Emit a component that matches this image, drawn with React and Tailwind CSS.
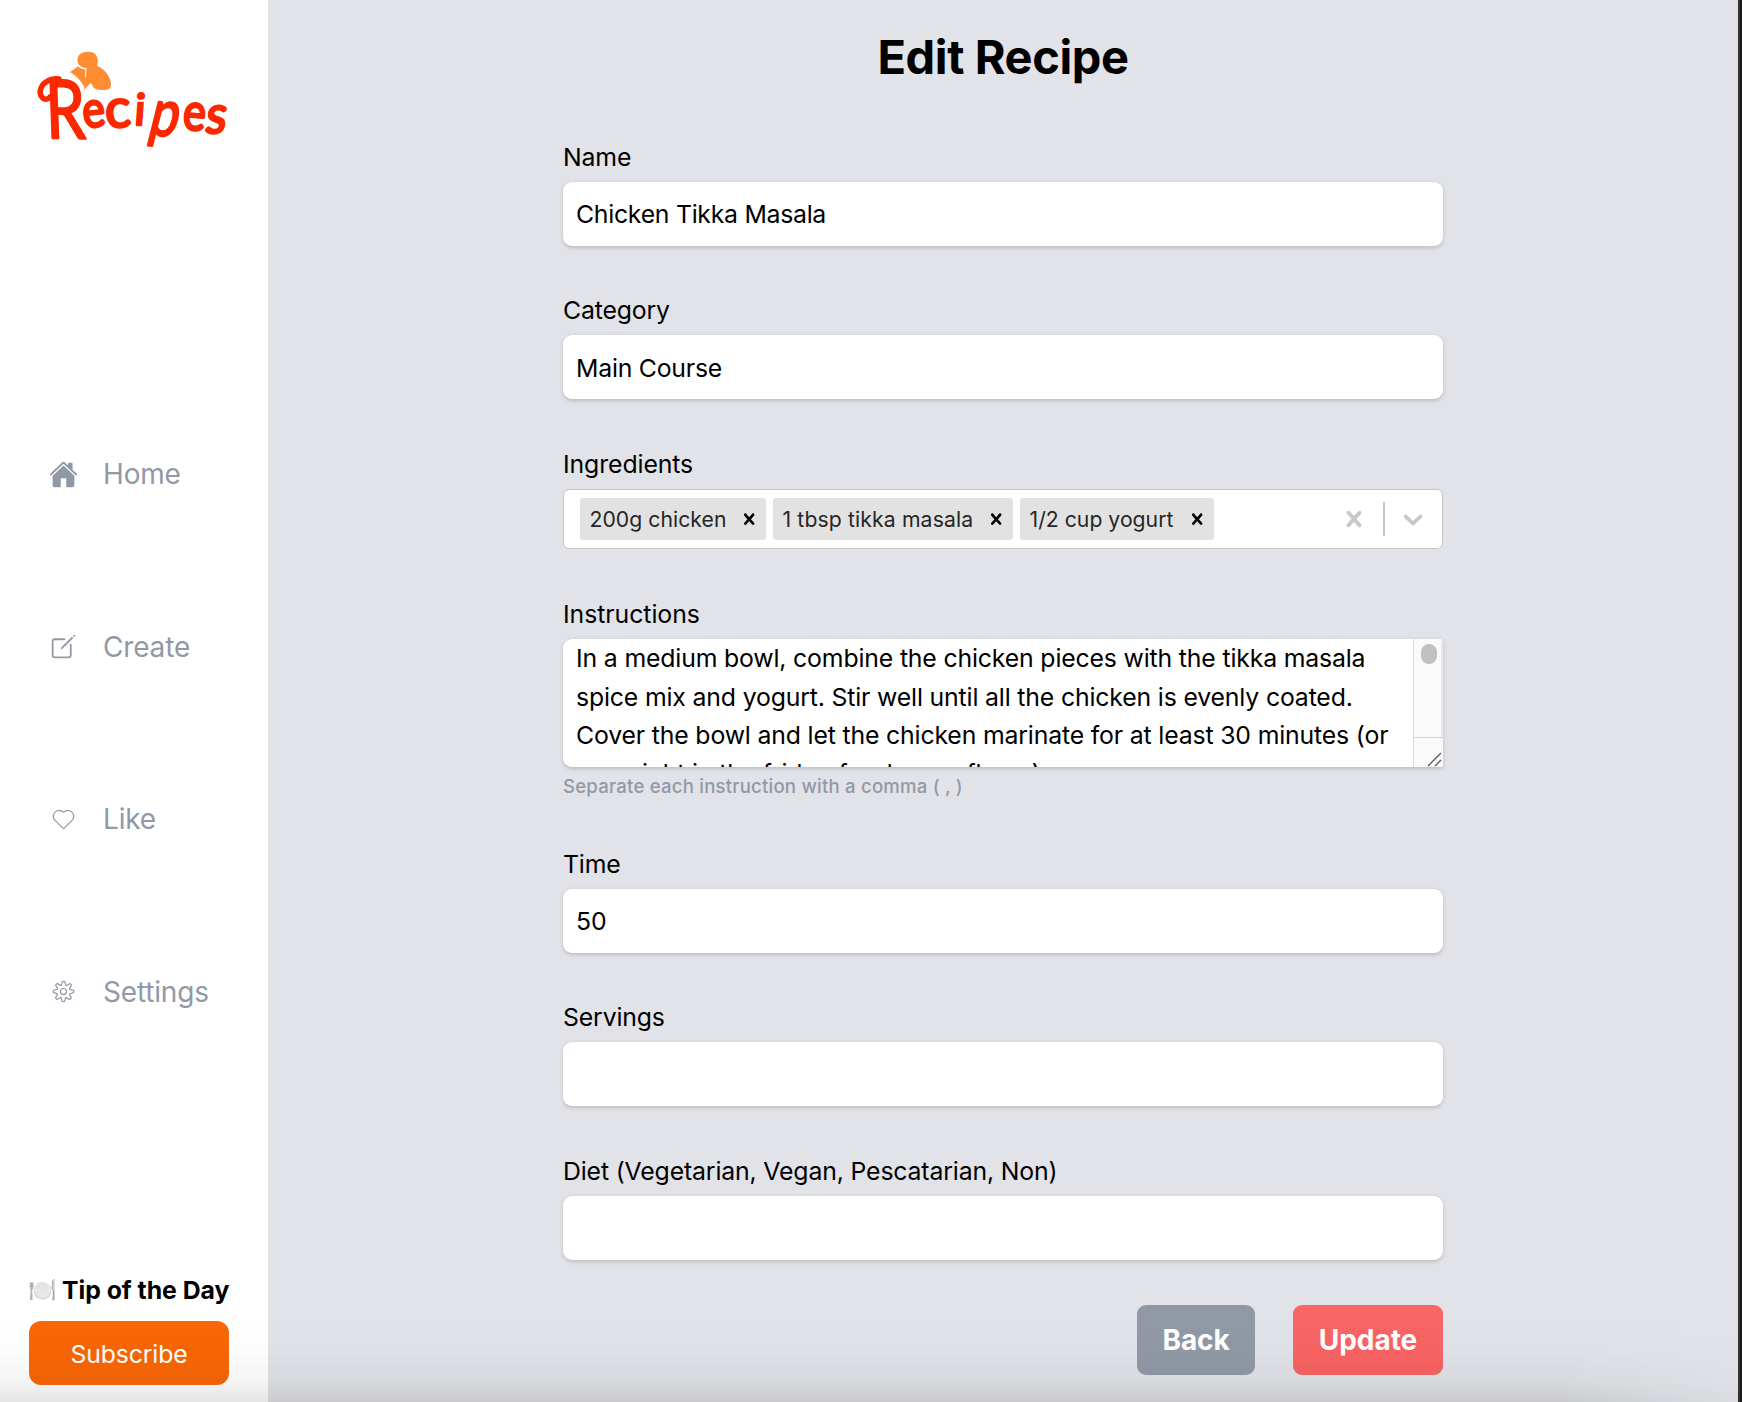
import React from "react";
import { IoHome, IoCreateOutline } from "react-icons/io5";
import { CiHeart, CiSettings } from "react-icons/ci";

const NAV = [
  { label: "Home", Icon: IoHome },
  { label: "Create", Icon: IoCreateOutline },
  { label: "Like", Icon: CiHeart },
  { label: "Settings", Icon: CiSettings },
];

const CHIPS = [
  { label: "200g chicken", width: "w-[186px]", spacing: "tracking-[0.002em]" },
  { label: "1 tbsp tikka masala", width: "w-[240px]", spacing: "tracking-[0.006em]" },
  { label: "1/2 cup yogurt", width: "w-[194px]", spacing: "tracking-[0.001em]" },
];

const LINES = [
  "In a medium bowl, combine the chicken pieces with the tikka masala",
  "spice mix and yogurt. Stir well until all the chicken is evenly coated.",
  "Cover the bowl and let the chicken marinate for at least 30 minutes (or",
  "overnight in the fridge for deeper flavor)",
];

const CROSS =
  "M14.348 14.849c-0.469 0.469-1.229 0.469-1.697 0l-2.651-3.030-2.651 3.029c-0.469 0.469-1.229 0.469-1.697 0-0.469-0.469-0.469-1.229 0-1.697l2.758-3.15-2.759-3.152c-0.469-0.469-0.469-1.228 0-1.697s1.228-0.469 1.697 0l2.652 3.031 2.651-3.031c0.469-0.469 1.228-0.469 1.697 0s0.469 1.229 0 1.697l-2.758 3.152 2.758 3.15c0.469 0.469 0.469 1.229 0 1.698z";
const CHEVRON =
  "M4.516 7.548c0.436-0.446 1.043-0.481 1.576 0l3.908 3.747 3.908-3.747c0.533-0.481 1.141-0.446 1.574 0 0.436 0.445 0.408 1.197 0 1.615-0.406 0.418-4.695 4.502-4.695 4.502-0.217 0.223-0.502 0.335-0.787 0.335s-0.57-0.112-0.789-0.335c0 0-4.287-4.084-4.695-4.502s-0.436-1.17 0-1.615z";

function Logo() {
  return (
    <svg width="230" height="140" viewBox="0 0 230 140" className="block">
      <g
        fill="#fb2800"
        stroke="#fb2800"
        strokeWidth="2.400"
        strokeLinejoin="round"
        strokeLinecap="round"
        className="font-['Lato'] font-normal"
      >
        <path d="M30 67C25 73 18 66 21 58C24 51 32 48 39 49" strokeWidth="5.500" fill="none" />
        <text transform="translate(26.500 108) rotate(1) skewX(3) scale(0.880 1.130)" fontSize="72" strokeWidth="2">R</text>
        <text transform="translate(64 98) rotate(-6) scale(0.930 1.100)" fontSize="46">e</text>
        <text transform="translate(86 98) rotate(-4) scale(1.080 1.080)" fontSize="50">c</text>
        <text transform="translate(113.500 95) skewX(-4) scale(1 0.950)" fontSize="46">i</text>
        <text transform="translate(127 104) rotate(6) skewX(-8) scale(1.200 1.560)" fontSize="42" strokeWidth="1.600">p</text>
        <text transform="translate(162 99) rotate(5) scale(0.930 1.130)" fontSize="46">e</text>
        <text transform="translate(184 103) skewX(-8) scale(0.980 1.080)" fontSize="49">s</text>
      </g>
      <path d="M50 42L58.500 36Q63 40 66 39.500L66 46L65 58Q60 48 50 42Z" fill="#ff8c33" />
      <path
        d="M57.500 30C57.500 24.500 62 21.800 68 21.800C74 21.800 77.800 25 77.800 31Q77.800 34 77 36C84 38 91 47 91 54C91 59 88 60 83 60C76 60 74 59 72.500 55.500Q71.500 52 69.500 54L64 60L66 47L66 38.500C61 38 57.500 34.500 57.500 30Z"
        fill="#ff8c33"
      />
      <path d="M58 35.500Q61.500 39 66.500 38.600M66 39.500L65.500 47" stroke="#fff" strokeWidth="1.100" fill="none" />
    </svg>
  );
}

function Label({ children, spacing }) {
  return (
    <div className={`mb-[5.600px] h-[38.800px] pt-[0.400px] leading-[38.400px] ${spacing}`}>{children}</div>
  );
}

function Field({ label, value, spacing }) {
  return (
    <div className="h-[153.6px]">
      <Label spacing="tracking-[-0.006em]">{label}</Label>
      <div className={`h-16 rounded-[9px] bg-white px-[13px] pt-[0.400px] leading-[64px] shadow-[0_1.600px_4.800px_rgba(0,0,0,0.1),0_1.600px_3px_rgba(0,0,0,0.07)] ${spacing || ""}`}>
        {value}
      </div>
    </div>
  );
}

export default function App() {
  return (
    <div className="relative flex h-[1402px] w-[1742px] overflow-hidden bg-[#e2e3e8] font-['Inter','Liberation_Sans',sans-serif] text-[24.8px] text-black">
      <aside className="flex w-[268px] shrink-0 flex-col bg-white">
        <div className="ml-[20px] mt-[30px] h-[140px]">
          <Logo />
        </div>
        <nav className="mt-[217.800px] flex flex-col">
          {NAV.map(({ label, Icon }) => (
            <div key={label} className="flex h-[172.600px] items-center text-[28px] tracking-[-0.006em] text-[#9199a7]">
              <Icon className="ml-[49px] mr-[25px] h-[29px] w-[29px]" />
              <span>{label}</span>
            </div>
          ))}
        </nav>
        <div className="ml-[29px] mt-[193.300px] flex h-[38px] w-[210px] items-center whitespace-nowrap font-bold tracking-[-0.001em]">
          <span className="w-[33px] -translate-x-px text-[23px] font-normal tracking-normal brightness-[0.850] contrast-125">🍽️</span>
          <span>Tip of the Day</span>
        </div>
        <button className="ml-[29px] mt-[11.300px] h-16 w-[200px] rounded-[12px] bg-[#f96706] pt-[3px] tracking-[-0.006em] text-white">
          Subscribe
        </button>
      </aside>

      <main className="flex flex-1 flex-col items-center pr-[4px]">
        <div className="flex w-[880px] flex-col">
          <h1 className="mb-[51.300px] mt-[28px] h-[58px] text-center text-[47px] font-bold leading-[58px] tracking-[-0.0088em]">
            Edit Recipe
          </h1>
          <Field label="Name" value="Chicken Tikka Masala" spacing="tracking-[-0.011em]" />
          <Field label="Category" value="Main Course" spacing="tracking-[-0.009em]" />

          <div className="h-[149.800px]">
            <Label spacing="tracking-[-0.004em]">Ingredients</Label>
            <div className="flex h-[60px] items-center rounded-[6px] border-[1.600px] border-[#c6c6c9] bg-white pl-[16px]">
              <div className="flex flex-1 gap-[7px]">
                {CHIPS.map((c) => (
                  <div
                    key={c.label}
                    className={`flex h-[42px] items-center justify-between rounded-[3px] bg-[#e2e2e2] pl-[9.500px] pr-[6px] text-[21.200px] text-[#262626] ${c.width}`}
                  >
                    <span className={`whitespace-nowrap pt-[2px] ${c.spacing}`}>{c.label}</span>
                    <svg width="22.400" height="22.400" viewBox="0 0 20 20" fill="#000">
                      <path d={CROSS} />
                    </svg>
                  </div>
                ))}
              </div>
              <svg width="32" height="32" viewBox="0 0 20 20" fill="#c8c8c8" className="mr-[13px]">
                <path d={CROSS} />
              </svg>
              <span className="h-[34px] w-[2px] bg-[#c8c8c8]" />
              <svg width="32" height="32" viewBox="0 0 20 20" fill="#c8c8c8" className="ml-[12px] mr-[13px]">
                <path d={CHEVRON} />
              </svg>
            </div>
          </div>

          <div className="h-[250px]">
            <Label spacing="tracking-[-0.002em]">Instructions</Label>
            <div className="flex h-32 overflow-hidden rounded-l-[9px] rounded-r-[3px] bg-white shadow-[0_1.600px_4.800px_rgba(0,0,0,0.1),0_1.600px_3px_rgba(0,0,0,0.07)]">
              <div className="flex-1 overflow-hidden pl-[13px] pt-[0.500px] tracking-[-0.0063em]">
                {LINES.map((l) => (
                  <div key={l} className="h-[38.400px] whitespace-nowrap leading-[38.400px]">
                    {l}
                  </div>
                ))}
              </div>
              <div className="flex w-[30px] flex-col border-l border-[#dedede] bg-[#fafafa]">
                <div className="flex h-[98px] justify-center border-r-2 border-[#e9e9e9] pl-[2px] pt-[5px]">
                  <div className="h-5 w-4 rounded-full bg-[#c1c1c1]" />
                </div>
                <div className="h-[30px] border-t border-[#d4d4d4]">
                  <svg width="29" height="29" viewBox="0 0 29 29" fill="none">
                    <path d="M14 28L27 15M21 28L27 22" stroke="#555" strokeWidth="1.300" />
                  </svg>
                </div>
              </div>
            </div>
            <div className="mt-[5px] h-[29px] text-[18.600px] font-medium leading-[29px] tracking-[0.011em] text-[#9199a7]">
              Separate each instruction with a comma ( , )
            </div>
          </div>

          <Field label="Time" value="50" />
          <Field label="Servings" value="" />
          <Field label="Diet (Vegetarian, Vegan, Pescatarian, Non)" value="" />

          <div className="flex justify-end gap-[38px] text-[28px] font-bold text-white">
            <button className="h-[70px] w-[118px] rounded-[9px] bg-[#9199a7] tracking-[-0.004em]">Back</button>
            <button className="h-[70px] w-[150px] rounded-[9px] bg-[#f96464] tracking-[-0.002em]">Update</button>
          </div>
        </div>
      </main>

      <div className="pointer-events-none absolute bottom-0 left-0 h-[82px] w-[1738px] bg-[linear-gradient(to_bottom,transparent,rgba(0,0,0,0.012)_40%,rgba(0,0,0,0.045)_75%,rgba(0,0,0,0.1))] [mask-image:linear-gradient(to_right,#000,#000_90%,rgba(0,0,0,0.250))]" />
      <div className="absolute right-0 top-0 h-full w-[4px] border-l-2 border-[#333] bg-[#1b1b19]" />
    </div>
  );
}
